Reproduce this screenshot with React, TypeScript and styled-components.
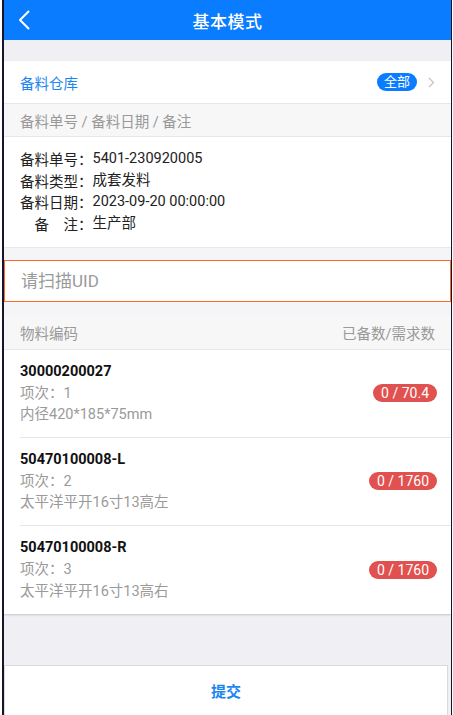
import styled, { createGlobalStyle } from "styled-components";

const GlobalStyle = createGlobalStyle`
  html, body {
    margin: 0;
    padding: 0;
    background: #ffffff;
  }
  body {
    font-family: Roboto, "Noto Sans CJK SC", "Noto Sans", sans-serif;
    -webkit-font-smoothing: antialiased;
  }
  * { box-sizing: border-box; }
`;

const Frame = styled.div`
  margin-left: 2px;
  width: 450px;
  height: 715px;
  border-left: 2px solid #14142a;
  border-right: 1px solid #14142a;
  background: #efeff4;
  display: flex;
  flex-direction: column;
  overflow: hidden;
`;

const NavBar = styled.header`
  height: 40px;
  flex-shrink: 0;
  background: #0a7cff;
  display: grid;
  grid-template-columns: 44px 1fr 44px;
  align-items: center;
  color: #fff;
`;

const BackButton = styled.button`
  border: 0;
  background: none;
  padding: 0 0 0 14px;
  height: 40px;
  display: flex;
  align-items: center;
  cursor: pointer;
`;

const Title = styled.h1`
  margin: 0;
  text-align: center;
  font-size: 17px;
  font-weight: 500;
  letter-spacing: 0.5px;
`;

const Spacer = styled.div<{ $h: number }>`
  height: ${(p) => p.$h}px;
  flex-shrink: 0;
`;

const Card = styled.section`
  background: #fff;
  flex-shrink: 0;
  box-shadow: 0 1px 2px rgba(0, 0, 0, 0.18);
`;

const PickRow = styled.div`
  height: 43px;
  display: flex;
  align-items: center;
  padding: 0 16px;
  border-bottom: 1px solid #e8e8e8;
`;

const PickLabel = styled.span`
  flex: 1;
  color: #1a86f0;
  font-size: 14.5px;
`;

const Pill = styled.span`
  background: #0a7cff;
  color: #fff;
  font-size: 13px;
  line-height: 16px;
  padding: 1px 7px;
  border-radius: 9px;
  margin-right: 11px;
`;

const SectionHead = styled.div`
  height: 33px;
  display: flex;
  align-items: center;
  justify-content: space-between;
  padding: 0 16px;
  background: #f7f7f7;
  border-bottom: 1px solid #e8e8e8;
  color: #999;
  font-size: 14.5px;
`;

const InfoBlock = styled.div`
  padding: 11px 16px 12px;
  display: flex;
  flex-direction: column;
`;

const InfoLine = styled.div`
  font-size: 14.5px;
  line-height: 21.7px;
  color: #222;
  display: flex;
`;

const InfoKey = styled.span`
  font-family: "Noto Sans CJK SC", sans-serif;
  white-space: pre;
  width: 5em;
  flex-shrink: 0;
`;

const ScanGap = styled.div`
  height: 13px;
  background: #f5f5f7;
  border-top: 1px solid #e9e9ec;
`;

const ScanInput = styled.input`
  display: block;
  width: 100%;
  height: 42px;
  border: 1px solid #f76a2c;
  padding: 0 16px;
  font-family: inherit;
  font-size: 17px;
  color: #333;
  outline: none;
  caret-color: #666;
  &::placeholder {
    color: #9a9a9a;
  }
`;

const ListGap = styled.div`
  height: 15px;
  background: #f5f5f7;
`;

const Item = styled.div`
  height: 88px;
  display: flex;
  align-items: center;
  margin-left: 16px;
  padding-right: 14px;
  &:not(:last-child) {
    border-bottom: 1px solid #e6e6e6;
  }
`;

const ItemText = styled.div`
  flex: 1;
  display: flex;
  flex-direction: column;
`;

const ItemCode = styled.div`
  font-size: 14.5px;
  font-weight: 700;
  color: #111;
  line-height: 22px;
`;

const ItemSub = styled.div`
  font-size: 14.5px;
  color: #9a9a9a;
  line-height: 21.5px;
`;

const QtyBadge = styled.span`
  background: #e0514f;
  color: #fff;
  font-size: 14px;
  line-height: 18px;
  padding: 0 8px;
  border-radius: 9px;
`;

const Fill = styled.div`
  flex: 1;
`;

const SubmitButton = styled.button`
  height: 50px;
  flex-shrink: 0;
  margin-right: 3px;
  background: #fff;
  border: 1px solid #d9d9de;
  border-bottom: 0;
  color: #1a86f0;
  font-family: inherit;
  font-size: 15px;
  font-weight: 700;
  cursor: pointer;
  padding-bottom: 2px;
`;

const info = [
  ["备料单号：", "5401-230920005"],
  ["备料类型：", "成套发料"],
  ["备料日期：", "2023-09-20 00:00:00"],
  ["\u3000备\u3000注：", "生产部"],
];

const items = [
  { code: "30000200027", seq: 1, desc: "内径420*185*75mm", qty: "0 / 70.4" },
  { code: "50470100008-L", seq: 2, desc: "太平洋平开16寸13高左", qty: "0 / 1760" },
  { code: "50470100008-R", seq: 3, desc: "太平洋平开16寸13高右", qty: "0 / 1760" },
];

export default function App() {
  return (
    <>
      <GlobalStyle />
      <Frame>
        <NavBar>
          <BackButton aria-label="返回">
            <svg width="12" height="20" viewBox="0 0 12 20" fill="none">
              <path d="M10.5 1.5 2 10l8.5 8.5" stroke="#fff" strokeWidth="2" strokeLinecap="round" strokeLinejoin="round" />
            </svg>
          </BackButton>
          <Title>基本模式</Title>
          <div />
        </NavBar>
        <Spacer $h={21} />
        <Card>
          <PickRow>
            <PickLabel>备料仓库</PickLabel>
            <Pill>全部</Pill>
            <svg width="7" height="11" viewBox="0 0 7 11" fill="none">
              <path d="M1 1l4.5 4.5L1 10" stroke="#c4c4c8" strokeWidth="1.3" />
            </svg>
          </PickRow>
          <SectionHead>备料单号 / 备料日期 / 备注</SectionHead>
          <InfoBlock>
            {info.map(([k, v]) => (
              <InfoLine key={k}>
                <InfoKey>{k}</InfoKey>
                <span>{v}</span>
              </InfoLine>
            ))}
          </InfoBlock>
          <ScanGap />
          <ScanInput placeholder="请扫描UID" autoFocus />
          <ListGap />
          <SectionHead>
            <span>物料编码</span>
            <span>已备数/需求数</span>
          </SectionHead>
          <div>
            {items.map((it) => (
              <Item key={it.code}>
                <ItemText>
                  <ItemCode>{it.code}</ItemCode>
                  <ItemSub>项次：{it.seq}</ItemSub>
                  <ItemSub>{it.desc}</ItemSub>
                </ItemText>
                <QtyBadge>{it.qty}</QtyBadge>
              </Item>
            ))}
          </div>
        </Card>
        <Fill />
        <SubmitButton>提交</SubmitButton>
      </Frame>
    </>
  );
}
